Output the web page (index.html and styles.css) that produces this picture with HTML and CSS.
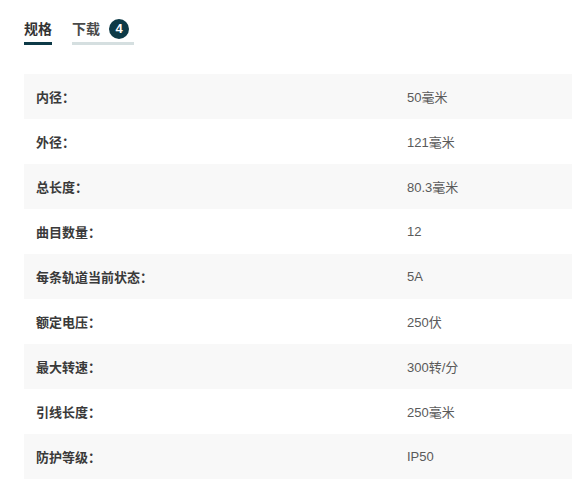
FILE: index.html
```html
<!DOCTYPE html>
<html lang="zh">
<head>
<meta charset="utf-8">
<link rel="stylesheet" href="styles.css">
</head>
<body>
<div class="page">
  <div class="tabs">
    <div class="tab active"><span class="tab-label">规格</span></div>
    <div class="tab"><span class="tab-label">下载</span><span class="badge">4</span></div>
  </div>
  <div class="specs">
    <div class="row"><div class="key">内径：</div><div class="val">50毫米</div></div>
    <div class="row"><div class="key">外径：</div><div class="val">121毫米</div></div>
    <div class="row"><div class="key">总长度：</div><div class="val">80.3毫米</div></div>
    <div class="row"><div class="key">曲目数量：</div><div class="val">12</div></div>
    <div class="row"><div class="key">每条轨道当前状态：</div><div class="val">5A</div></div>
    <div class="row"><div class="key">额定电压：</div><div class="val">250伏</div></div>
    <div class="row"><div class="key">最大转速：</div><div class="val">300转/分</div></div>
    <div class="row"><div class="key">引线长度：</div><div class="val">250毫米</div></div>
    <div class="row"><div class="key">防护等级：</div><div class="val">IP50</div></div>
  </div>
</div>
</body>
</html>
```

FILE: styles.css
```css
html, body {
  margin: 0;
  padding: 0;
  background: #ffffff;
}
body {
  font-family: "Liberation Sans", "Noto Sans CJK SC", sans-serif;
  color: #333;
  overflow: hidden;
}
.page {
  padding: 0 0 0 24px;
}
.tabs {
  display: flex;
  gap: 20px;
  padding-top: 15px;
  height: 30px;
}
.tab {
  display: flex;
  align-items: center;
  gap: 9px;
  height: 27px;
  border-bottom: 3px solid #d5dfe0;
  font-size: 14px;
  font-weight: 700;
  color: #4a4a4a;
}
.tab.active {
  border-bottom-color: #0d3a47;
  color: #333;
}
.tab-label {
  line-height: 20px;
}
.badge {
  display: inline-flex;
  align-items: center;
  justify-content: center;
  width: 20px;
  height: 20px;
  border-radius: 50%;
  background: #0d3a47;
  color: #fff;
  font-size: 13px;
  font-weight: 700;
  margin-right: 5px;
}
.specs {
  margin-top: 29px;
  display: flex;
  flex-direction: column;
}
.row {
  display: grid;
  grid-template-columns: 371px 1fr;
  height: 45px;
  align-items: center;
  font-size: 13px;
}
.row:nth-child(odd) {
  background: #f8f8f8;
}
.key {
  padding-left: 12px;
  font-weight: 700;
  color: #3a3a3a;
}
.val {
  padding-left: 12px;
  color: #5a5a5a;
}
```
